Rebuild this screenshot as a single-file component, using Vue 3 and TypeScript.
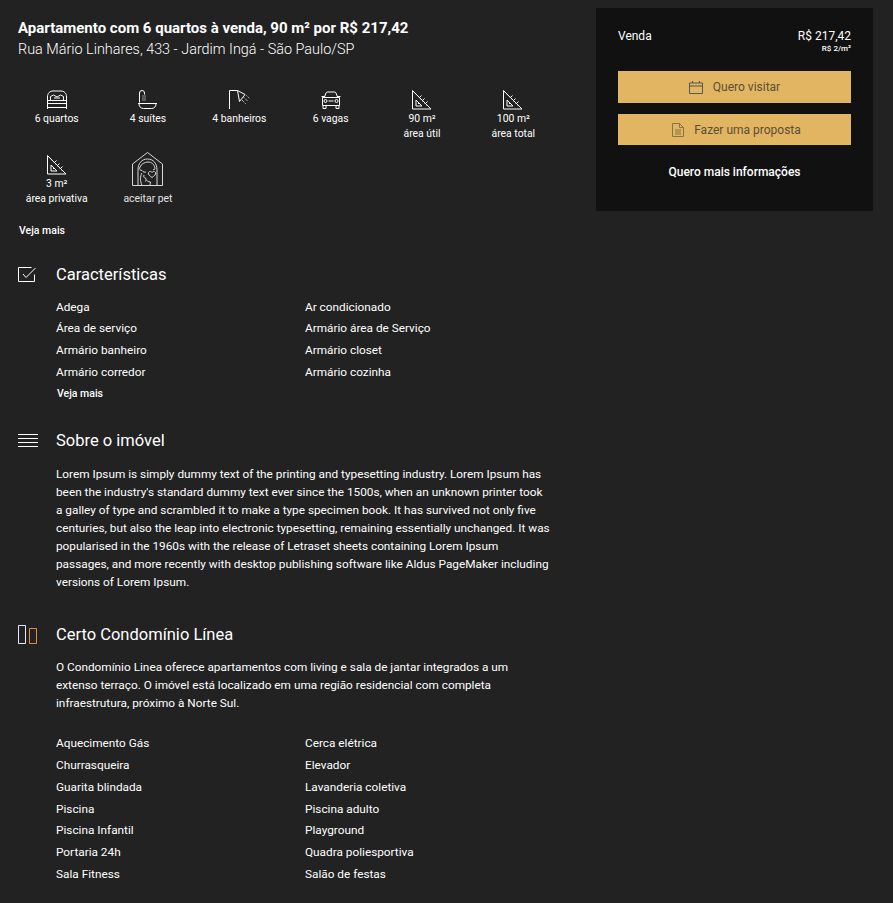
<script setup lang="ts">
interface Feature { label: string[]; icon: string }
const features: Feature[] = [
  { label: ['6 quartos'], icon: 'bed' },
  { label: ['4 suítes'], icon: 'bath' },
  { label: ['4 banheiros'], icon: 'shower' },
  { label: ['6 vagas'], icon: 'car' },
  { label: ['90 m²', 'área útil'], icon: 'rule' },
  { label: ['100 m²', 'área total'], icon: 'rule' },
  { label: ['3 m²', 'área privativa'], icon: 'rule' },
  { label: ['aceitar pet'], icon: 'pet' },
]
const caracteristicas = ['Adega', 'Ar condicionado', 'Área de serviço', 'Armário área de Serviço', 'Armário banheiro', 'Armário closet', 'Armário corredor', 'Armário cozinha']
const condominio = ['Aquecimento Gás', 'Cerca elétrica', 'Churrasqueira', 'Elevador', 'Guarita blindada', 'Lavanderia coletiva', 'Piscina', 'Piscina adulto', 'Piscina Infantil', 'Playground', 'Portaria 24h', 'Quadra poliesportiva', 'Sala Fitness', 'Salão de festas']
</script>

<template>
  <div class="page">
    <main class="main">
      <h1 class="title">Apartamento com 6 quartos à venda, 90 m² por R$ 217,42</h1>
      <p class="address">Rua Mário Linhares, 433 - Jardim Ingá - São Paulo/SP</p>

      <div class="features">
        <div v-for="f in features" :key="f.label.join()" class="feature" :class="{ 'feature-pet': f.icon === 'pet' }">
          <svg v-if="f.icon === 'bed'" class="ficon" width="20" height="20" viewBox="0 0 20 20" fill="none" stroke="#fff" stroke-width="1">
            <path d="M.5 19V7C.5 3 3 1 6 1h8c3 0 5.500 2 5.500 6v12" />
            <path d="M.5 10.500h19M.5 13.500h19M.5 17.500h19" />
            <path d="M3.500 10V6.500l3-1.500 3.500 2 3.500-2 3 1.500V10M7 8h6" />
          </svg>
          <svg v-else-if="f.icon === 'bath'" class="ficon" width="20" height="20" viewBox="0 0 20 20" fill="none" stroke="#fff" stroke-width="1">
            <path d="M1.500 12.500V3a2.500 2.500 0 0 1 5 0v1.500" />
            <path d="M4.500 6h4M4.500 8h4M4.500 10h4" stroke-dasharray="1 1" />
            <path d="M0 13.500h19M1 13.500c0 3.500 2 5 4.500 5h8c2.500 0 4.500-1.500 4.500-5" />
          </svg>
          <svg v-else-if="f.icon === 'shower'" class="ficon" width="21" height="20" viewBox="0 0 21 20" fill="none" stroke="#fff" stroke-width="1">
            <path d="M.5 19V.5h8" />
            <path d="M8.500.5l7.500 4-5.500 7Z" />
            <path d="M15 7.500l3.500 3.500M17.500 5.500l3 3M13 10l3.500 3.500" stroke-dasharray="1 1" />
          </svg>
          <svg v-else-if="f.icon === 'car'" class="ficon" width="20" height="20" viewBox="0 0 20 20" fill="none" stroke="#fff" stroke-width="1">
            <path d="M3.500 7l1.500-4c.3-.8 1-1 1.500-1h7c.5 0 1.200.2 1.500 1l1.500 4M.5 6.500h3v1M19.500 6.500h-3v1" />
            <path d="M1.500 7.500h17v8h-17ZM2 15.500v3h3v-3M15 15.500v3h3v-3" />
            <circle cx="4.500" cy="11" r="1.500" />
            <circle cx="15.500" cy="11" r="1.500" />
            <path d="M7.500 11h5" />
          </svg>
          <svg v-else-if="f.icon === 'rule'" class="ficon" width="20" height="20" viewBox="0 0 20 20" fill="none" stroke="#fff" stroke-width="1">
            <path d="M.5.5v18.500h18.500Z" />
            <path d="M4 10v6h6Z" />
            <path d="M6 13.500h1.500" />
            <path d="M2 2.500l14.500 14.500" stroke-dasharray="1 2" />
            <path d="M7.500 7.500l2-2M10.500 10.500l2-2M13.500 13.500l2-2" />
          </svg>
          <svg v-else class="ficon-pet" width="31" height="34" viewBox="0 0 31 34" fill="none" stroke="#d8d8d8" stroke-width="1">
            <path d="M.5 33.500V12L15.500.5 30.500 12v21.500Z" />
            <path d="M6 33.500V18C6 11 10 7 15.500 7S25 11 25 18v15.500" />
            <path d="M8 15c1-3 5-5 8-5 3.500 0 6 2 7 6 .3 1.500-1 2-2 1.500M8 15c-1 2 0 3.500 2 3.500 1 1.500 3 2 4 1.500" />
            <path d="M16.500 20.500c1-1.500 3-1.300 3.500 0 .6-1.300 2.500-1.500 3.500 0 .8 2-1.500 3.500-3.500 5-2-1.500-4.300-3-3.500-5Z" />
            <path d="M10 21c-2 3-2 8 0 12.500M12 23c-.8 1.500 0 3 1.500 3 .5 3 3 4 5 4 0 1.500-.5 2.500-1 3.500" />
            <path d="M13 29h1M11 33.500h6" />
          </svg>
          <span v-for="line in f.label" :key="line" class="flabel">{{ line }}</span>
        </div>
      </div>
      <a class="more more-top">Veja mais</a>

      <section class="section sec-car">
        <header class="head">
          <svg class="hicon icon-check" width="18" height="16" viewBox="0 0 18 16" fill="none" stroke="#fff" stroke-width="1">
            <path d="M16.500 7.500v7H.5V.5h13" />
            <path d="M5 7l3 3.500L17.500 1" />
          </svg>
          <h2>Características</h2>
        </header>
        <ul class="list">
          <li v-for="c in caracteristicas" :key="c">{{ c }}</li>
        </ul>
        <a class="more more-list">Veja mais</a>
      </section>

      <section class="section sec-sobre">
        <header class="head">
          <svg class="hicon" width="20" height="13" viewBox="0 0 20 13" fill="none" stroke="#fff" stroke-width="1">
            <path d="M0 .5h20M0 4.500h20M0 8.500h20M0 12.500h20" />
          </svg>
          <h2>Sobre o imóvel</h2>
        </header>
        <p class="text">Lorem Ipsum is simply dummy text of the printing and typesetting industry. Lorem Ipsum has been the industry's standard dummy text ever since the 1500s, when an unknown printer took a galley of type and scrambled it to make a type specimen book. It has survived not only five centuries, but also the leap into electronic typesetting, remaining essentially unchanged. It was popularised in the 1960s with the release of Letraset sheets containing Lorem Ipsum passages, and more recently with desktop publishing software like Aldus PageMaker including versions of Lorem Ipsum.</p>
      </section>

      <section class="section sec-cond">
        <header class="head">
          <svg class="hicon" width="20" height="19" viewBox="0 0 20 19" fill="none" stroke-width="1">
            <path d="M.5.5h7v18h-7Z" stroke="#dfe8ff" />
            <path d="M11.500 3.500h7v15h-7Z" stroke="#e0903f" />
          </svg>
          <h2>Certo Condomínio Línea</h2>
        </header>
        <p class="text cond-text">O Condomínio Linea oferece apartamentos com living e sala de jantar integrados a um extenso terraço. O imóvel está localizado em uma região residencial com completa infraestrutura, próximo à Norte Sul.</p>
        <ul class="list">
          <li v-for="c in condominio" :key="c">{{ c }}</li>
        </ul>
      </section>
    </main>

    <aside class="card">
      <div class="price-row">
        <span class="sale">Venda</span>
        <div class="prices">
          <span class="price">R$ 217,42</span>
          <span class="per">R$ 2/m²</span>
        </div>
      </div>
      <button class="btn btn-visit">
        <svg width="14" height="13" viewBox="0 0 14 13" fill="none" stroke="#555" stroke-width="1">
          <path d="M.5 2h13v10.500H.5ZM.5 5h13M3.500 0v2M10.500 0v2" />
        </svg>
        <span>Quero visitar</span>
      </button>
      <button class="btn btn-offer">
        <svg width="12" height="14" viewBox="0 0 12 14" fill="none" stroke="#8a7247" stroke-width="1">
          <path d="M.5.5h7l4 4v9H.5ZM7.500.5v4h4M3 7h6M3 9h6M3 11h6" />
        </svg>
        <span>Fazer uma proposta</span>
      </button>
      <a class="info">Quero mais informações</a>
    </aside>
  </div>
</template>

<style>
html, body { margin: 0; background: #222; }
</style>

<style scoped>
.page {
  display: flex;
  align-items: flex-start;
  width: 893px;
  height: 903px;
  box-sizing: border-box;
  overflow: hidden;
  background: #222;
  color: #fff;
  font-family: Roboto, "Liberation Sans", sans-serif;
  font-size: 11.8px;
}
.main { width: 548px; margin-left: 11px; padding-top: 19px; flex: none; }
.title { margin: 0 0 0 7px; font-size: 15px; line-height: 19px; font-weight: 700; white-space: nowrap; }
.address { margin: 3px 0 0 7px; font-size: 14.4px; line-height: 18px; font-weight: 300; white-space: nowrap; }
.features { display: grid; grid-template-columns: repeat(6, 1fr); grid-auto-rows: 65px; margin-top: 31px; }
.feature { display: flex; flex-direction: column; align-items: center; }
.ficon { display: block; height: 20px; margin-bottom: 1px; }
.ficon-pet { display: block; margin-top: -3px; margin-bottom: 5px; }
.feature-pet .flabel { color: #e4e4e4; }
.flabel { font-size: 10.4px; line-height: 15px; white-space: nowrap; }
.more { display: block; font-size: 10.5px; line-height: 14px; font-weight: 500; }
.more-top { margin: 4px 0 0 8px; }
.section { margin-left: 7px; }
.sec-car { margin-top: 27px; }
.sec-sobre { margin-top: 30px; }
.sec-cond { margin-top: 34px; }
.head { display: flex; align-items: center; height: 20px; }
.hicon { flex: none; margin-right: 18px; }
.icon-check { margin-right: 20px; }
.head h2 { margin: 0; font-size: 16.5px; line-height: 20px; font-weight: 400; white-space: nowrap; }
.list { display: grid; grid-template-columns: 249px 1fr; grid-auto-rows: 21.75px; margin: 0 0 0 38px; padding: 0; list-style: none; }
.sec-car .list { margin-top: 11.7px; }
.list li { line-height: 21.75px; white-space: nowrap; }
.more-list { margin: 3.3px 0 0 39px; }
.text { margin: 14px 0 0 38px; width: 495px; line-height: 18px; }
.cond-text { margin-top: 13px; width: 470px; }
.sec-cond .list { margin-top: 21.3px; }
.card { width: 277px; height: 203px; box-sizing: border-box; margin: 8px 0 0 37px; padding: 21px 22px 0; background: #111; flex: none; }
.price-row { display: flex; justify-content: space-between; height: 42px; }
.sale, .price { font-size: 12px; line-height: 14px; }
.prices { display: flex; flex-direction: column; align-items: flex-end; }
.per { font-size: 8px; line-height: 10px; margin-top: 1px; font-weight: 500; }
.btn { display: flex; align-items: center; justify-content: center; width: 100%; padding: 0; border: 0; background: #e2b563; color: #5a4f36; font-family: inherit; font-size: 12px; }
.btn-visit { height: 32px; gap: 10px; }
.btn-offer { height: 31px; gap: 10px; margin-top: 11px; padding-left: 4px; }
.info { display: block; margin-top: 20px; text-align: center; font-size: 12px; line-height: 15px; font-weight: 500; }
</style>
